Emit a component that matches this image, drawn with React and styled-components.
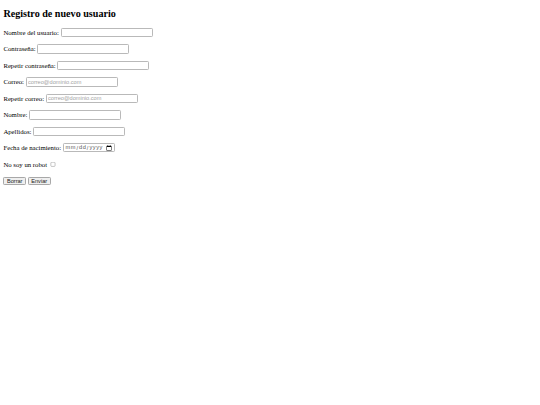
import { useState } from 'react'
import styled, { createGlobalStyle } from 'styled-components'

const GlobalStyle = createGlobalStyle`
html, body {
    margin: 0;
    background: #fff;
}
`

// the reference is a 1280px wide page shown in a 540px window
const Page = styled.div`
zoom: 0.421875;
padding: 0 8px;
font-family: "Liberation Serif", "Times New Roman", serif;
font-size: 16px;
color: #000;
`
const Title = styled.h2`
font-size: 24px;
font-weight: bold;
margin: 0.83em 0;
`
const Form = styled.form`
margin: 0;
`
const Field = styled.div`
display: flex;
align-items: center;
gap: 4px;
height: 23px;
margin: 16px 0;
`
const Label = styled.label`
font-size: 16px;
line-height: 22px;
color: #000;
`
const Input = styled.input`
box-sizing: border-box;
width: ${props => props.$width || 218}px;
height: 22px;
margin: 0;
padding: 1px 3px;
border: 2px solid #b9b9b9;
border-radius: 3px;
background: #fff;
font-family: "Liberation Sans", Arial, sans-serif;
font-size: 13.333px;
color: #444;

&::placeholder {
    color: #a3a3a3;
}
`
const DateInput = styled(Input)`
letter-spacing: 1.4px;
color: #555;
`
const Check = styled.input`
margin: 3px 3px 3px 4px;
`
const Button = styled.button`
box-sizing: border-box;
height: 19px;
padding: 1px 6px;
border: 2px solid #a8a8a8;
border-radius: 3px;
background: #efefef;
font-family: "Liberation Sans", Arial, sans-serif;
font-size: 13.333px;
color: #222;
`

const fields = [
    { name: 'usuario', label: 'Nombre del usuario:', type: 'text' },
    { name: 'password', label: 'Contraseña:', type: 'password' },
    { name: 'password2', label: 'Repetir contraseña:', type: 'password' },
    { name: 'correo', label: 'Correo:', type: 'email', placeholder: 'correo@dominio.com' },
    { name: 'correo2', label: 'Repetir correo:', type: 'email', placeholder: 'correo@dominio.com' },
    { name: 'nombre', label: 'Nombre:', type: 'text' },
    { name: 'apellidos', label: 'Apellidos:', type: 'text' },
]

const App = () => {
    const [data, setData] = useState({})

    const handleChange = (event) => {
        setData({ ...data, [event.target.name]: event.target.value })
    }

    const handleSubmit = (event) => {
        event.preventDefault()
        console.log(data)
    }

    return (
        <Page>
            <GlobalStyle />
            <Title>Registro de nuevo usuario</Title>
            <Form onSubmit={handleSubmit} onReset={() => setData({})}>
                {fields.map(f => (
                    <Field key={f.name}>
                        <Label htmlFor={f.name}>{f.label}</Label>
                        <Input
                            id={f.name}
                            name={f.name}
                            type={f.type}
                            placeholder={f.placeholder}
                            value={data[f.name] || ''}
                            onChange={handleChange}
                        />
                    </Field>
                ))}
                <Field>
                    <Label htmlFor="fecha">Fecha de nacimiento:</Label>
                    <DateInput id="fecha" name="fecha" type="date" $width={123} value={data.fecha || ''} onChange={handleChange} />
                </Field>
                <Field>
                    <Label htmlFor="robot">No soy un robot</Label>
                    <Check id="robot" name="robot" type="checkbox" />
                </Field>
                <Field>
                    <Button type="reset">Borrar</Button>
                    <Button type="submit">Enviar</Button>
                </Field>
            </Form>
        </Page>
    )
}

export default App
